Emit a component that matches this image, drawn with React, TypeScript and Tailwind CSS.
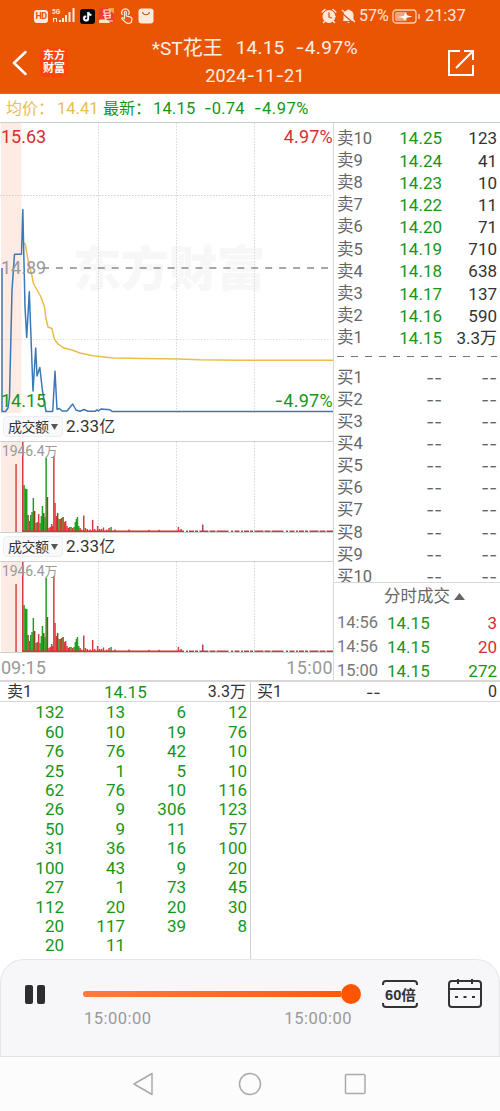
import React from "react";

const sells: [string, string, string][] = [
  ["卖10", "14.25", "123"],
  ["卖9", "14.24", "41"],
  ["卖8", "14.23", "10"],
  ["卖7", "14.22", "11"],
  ["卖6", "14.20", "71"],
  ["卖5", "14.19", "710"],
  ["卖4", "14.18", "638"],
  ["卖3", "14.17", "137"],
  ["卖2", "14.16", "590"],
  ["卖1", "14.15", "3.3万"],
];
const buys = ["买1", "买2", "买3", "买4", "买5", "买6", "买7", "买8", "买9", "买10"];
const trades: [string, string, string, boolean][] = [
  ["14:56", "14.15", "3", true],
  ["14:56", "14.15", "20", true],
  ["15:00", "14.15", "272", false],
];
const queue = [
  ["132", "13", "6", "12"],
  ["60", "10", "19", "76"],
  ["76", "76", "42", "10"],
  ["25", "1", "5", "10"],
  ["62", "76", "10", "116"],
  ["26", "9", "306", "123"],
  ["50", "9", "11", "57"],
  ["31", "36", "16", "100"],
  ["100", "43", "9", "20"],
  ["27", "1", "73", "45"],
  ["112", "20", "20", "30"],
  ["20", "117", "39", "8"],
  ["20", "11", "", ""],
];

const R = "#e0363c";
const G = "#1f9e1f";
const B = "#8a4a1c";
const bars: [number, number, string][] = [
  [16, 68, "#d04a4a"], [22.7, 90.5, "#d8383c"], [24, 47, G], [25.3, 43.5, G], [26.7, 43, G],
  [28, 17, B], [29.3, 11, R], [30.7, 17, G], [32, 20, G], [33.3, 34, G], [34.6, 21, B],
  [36, 9, G], [37.3, 10, R], [38.6, 18, R], [40, 9, G], [41.3, 16, G], [42.4, 26, G],
  [43.7, 19, B], [45, 15, G], [46.1, 74, G], [47.4, 35, B], [49, 4, R], [50.3, 5, R],
  [51.6, 8, R], [52.7, 6, R], [53.8, 76, R], [55, 29, R], [56.3, 16, R], [57.6, 19, B],
  [59, 13, G], [60.3, 13, R], [61.6, 14, G], [63, 15, B], [64.3, 10, R], [65.6, 11, R],
  [67, 6, R], [68.3, 4, R], [69.6, 5, R], [71, 5, G], [72.6, 4, R], [74, 5, G],
  [75.3, 10, G], [76.4, 13, G], [77.4, 15, G], [78.7, 6, G], [80, 4, R], [81.5, 2.5, R],
  [83.7, 16.5, R], [85.4, 4, G], [87.3, 3, R], [90, 2.5, R], [92.6, 12, R], [94.6, 3, R],
  [97.6, 6, R], [99.4, 3, R], [101.4, 3, R], [103.4, 4.5, R], [106.6, 2.5, R],
  [109, 4, R], [111, 5, G], [115, 2.5, R], [129, 2.5, R], [149, 2.2, R], [159, 2.2, R],
  [178.4, 5, R], [181, 3, R], [202.7, 7.5, "#b8404c"],
];

function Txt({ children }: { children: string }) {
  return (
    <>
      {children.split(/(-)/).map((s, i) =>
        s === "-" ? (
          <span key={i} className="font-[Inter]">-</span>
        ) : (
          <React.Fragment key={i}>{s}</React.Fragment>
        )
      )}
    </>
  );
}

function Grid({ h }: { h: number }) {
  return (
    <g stroke="#d8d8d8" strokeWidth="1" strokeDasharray="1.5 1.5">
      {[98.5, 176.5, 254.5].map((x) => (
        <line key={x} x1={x} x2={x} y1="0" y2={h} />
      ))}
    </g>
  );
}

function PriceChart() {
  return (
    <div className="relative h-[290px] w-full">
      <svg className="absolute inset-0" width="333" height="290" viewBox="0 123 333 290">
        <rect x="1" y="123" width="20.5" height="290" fill="#fdebe4" />
        <text x="73" y="286" textLength="192" fontSize="48" fontWeight="900" fill="#f7f7f7" fontFamily="Noto Sans CJK SC, sans-serif">东方财富</text>
        <g transform="translate(0 123)"><Grid h={290} /></g>
        <g stroke="#cfcfcf" strokeDasharray="1.5 1.5">
          <line x1="0" x2="331" y1="195.5" y2="195.5" />
          <line x1="0" x2="331" y1="339.5" y2="339.5" strokeOpacity=".6" />
        </g>
        <line x1="42" x2="329" y1="268" y2="268" stroke="#8b8b8b" strokeWidth="1.4" strokeDasharray="7 6.95" />
        <path d="M23 243L25.3 244L28 260L32 276L33.3 283L37 290L41 297L44.5 307L46 319L48 327L52 328.5L54.3 339L58 344L63.3 347.7L72 350L80 353L93 355.7L113 358L145 358.6L178 359L200 359.8L240 360.3L333 360.3" fill="none" stroke="#ebbd48" strokeWidth="1.5" strokeLinejoin="round" />
        <path d="M2 268V411.5H5.5L8 408L9.5 397L12 290L14.5 254.3H21.5L22.8 209.5L25 307L26.7 337.5L29.3 291.7L33 391L35.7 348L37 376L39.8 367.5L42.5 391L46 411.5H52.7L55 371.3L57 409.3L59.3 408.5L62 411H67L72.7 404L76 410L80 411.3L84 409.5L88 411.3H95L97 409.8L98.5 411L101 409L110 409.8L112 411.5H333" fill="none" stroke="#3a78b8" strokeWidth="1.5" strokeLinejoin="round" />
      </svg>
      <div className="absolute left-[1px] top-[4px] text-[18px] leading-5 text-[#d42f2f]">15.63</div>
      <div className="absolute right-0 top-[4px] text-[18px] leading-5 tracking-[0.2px] text-[#d42f2f]">4.97%</div>
      <div className="absolute left-[1px] top-[135px] text-[18px] leading-5 text-[#999]">14.89</div>
      <div className="absolute left-[1px] top-[268px] text-[18px] leading-5 text-[#169616]">14.15</div>
      <div className="absolute right-0 top-[268px] text-[18px] leading-5 tracking-[0.3px] text-[#169616]"><Txt>-4.97%</Txt></div>
    </div>
  );
}

function VolumeHeader() {
  return (
    <div className="flex h-[28px] items-center pb-px pl-[3px] text-[16px] leading-5 text-[#333]">
      <div className="flex h-[21px] w-[60px] items-center rounded-sm border border-[#eceef0] bg-[#f8f9fa] pl-[4px]">
        <span className="w-[43px] whitespace-nowrap text-[14px] tracking-[-0.5px]">成交额</span>
        <svg width="7" height="6"><path d="M0 0H7L3.5 6Z" fill="#555" /></svg>
      </div>
      <span className="ml-[3px] text-[17px]">2.33<span className="text-[16px]">亿</span></span>
    </div>
  );
}

function VolumeChart() {
  return (
    <div className="relative h-[92px] border-y border-[#d0d0d0]">
      <svg className="block" width="333" height="90">
        <rect x="1" y="0" width="20.5" height="90" fill="#fdebe4" />
        <Grid h={90} />
        {bars.map(([x, h, c], i) => (
          <rect key={i} x={x - 0.7} y={90 - h} width="1.5" height={h} fill={c} />
        ))}
        <path d="M22 89.2H184" stroke="#dd3038" strokeWidth="1.5" />
        <path d="M186 89.2H333" stroke="#c43a48" strokeWidth="1.5" strokeDasharray="2 1 5 1 3 1.5 9 1 6 1 12 2.5 2 1.5 5 1.5" />
      </svg>
      <div className="absolute left-[2px] top-0 text-[14px] leading-[18px] tracking-[-0.1px] text-[#999]">1946.4<span className="text-[13px]">万</span></div>
    </div>
  );
}

function StatusBar() {
  return (
    <div className="flex h-[32px] items-center pl-[34px] pr-[34px] text-[#ffe9dc]">
      <div className="flex h-[13px] w-[14px] items-center justify-center rounded-[3px] bg-[#ffe9dc] text-[9px] font-bold leading-none tracking-[-0.5px] text-[#ea5504]">HD</div>
      <svg className="ml-[4px]" width="24" height="16" viewBox="0 0 24 16" fill="#ffe9dc">
        <text x="0" y="6" fontSize="6.5" fontWeight="700" fontFamily="Roboto">5G</text>
        <path d="M1 10h4v4H4v-3H2v3H1zM7 12h2v2H7zM10 10h2v4h-2zM13 7h2v7h-2zM16.500 4h2v10h-2zM20.500 0h2v14h-2z" />
      </svg>
      <svg className="ml-[4px]" width="15" height="15" viewBox="0 0 15 15">
        <rect width="15" height="15" rx="3" fill="#080808" />
        <path d="M8 3v6.300a2.100 2.100 0 1 1-2.100-2.100M8 3c.3 1.800 1.500 2.800 3.300 3" fill="none" stroke="#4de5e5" strokeWidth="2" />
        <path d="M8.400 3.300v6.200a2.100 2.100 0 1 1-2.100-2.100M8.400 3.300c.3 1.700 1.500 2.500 3 2.700" fill="none" stroke="#fff" strokeWidth="1.500" />
      </svg>
      <svg className="ml-[4px]" width="16" height="16" viewBox="0 0 16 16">
        <rect width="15" height="15" rx="2" fill="#ef3d32" /><path d="M9 0h6v6z" fill="#f9a53b" />
        <path d="M5 2h6v3H5zM4 7.500h8M6 5v5h5V6M1 12h5l2-2M9 13h5" stroke="#ffe9dc" strokeWidth="1.200" fill="none" />
        <path d="M0 12h9l2 3H0z" fill="#ffe0c8" />
      </svg>
      <svg className="ml-[5px]" width="14" height="16" viewBox="0 0 14 16" fill="none" stroke="#ffe9dc" strokeWidth="1.200" strokeLinejoin="round" strokeLinecap="round">
        <path d="M4.500 9.500V4.200c0-1.300 1.800-1.300 1.800 0V8l4.500 1.200c1.200.4 1.400 1 1.100 2.200l-.7 3c-1.500 1-4 1-5.500 0L2 11c-.7-1.200.6-1.800 1.300-1.100l1.200 1" />
        <path d="M2.200 6.500a3.700 3.700 0 1 1 6.400 0" />
      </svg>
      <svg className="ml-[4px]" width="16" height="16" viewBox="0 0 16 16">
        <rect x=".5" y=".5" width="15" height="15" rx="3" fill="#ffe9dc" /><path d="M4.500 4c.7 3.600 6.300 3.600 7 0" fill="none" stroke="#b45526" strokeWidth="1.100" />
      </svg>
      <div className="flex-1" />
      <svg width="16" height="16" viewBox="0 0 16 16" fill="none" stroke="#ffe9dc" strokeLinecap="round">
        <circle cx="8" cy="8.500" r="6" fill="#ffe9dc" /><path d="M1.200 4L4 1.500M14.800 4L12 1.500M3.500 13.500l-1 1M12.500 13.500l1 1" strokeWidth="1.500" />
        <path d="M8 5v4l2.500 1" stroke="#ea5504" strokeWidth="1.300" />
      </svg>
      <svg className="ml-[4px]" width="15" height="16" viewBox="0 0 15 16">
        <path d="M2.500 12V7A5 5 0 0 1 6 2.200q1.500-1.500 3 0A5 5 0 0 1 12.500 7v5l1 1h-12zM6 14h3l-1.500 1z" fill="#ffe9dc" />
        <path d="M-1 3.500l14 12" stroke="#ea5504" strokeWidth="1.300" /><path d="M1 2l13 12" stroke="#ffe9dc" strokeWidth="1.200" />
      </svg>
      <span className="ml-[3px] w-[32px] whitespace-nowrap text-[16px] leading-4">57%</span>
      <svg className="ml-[1px]" width="29" height="15" viewBox="0 0 29 15">
        <rect x="1" y="1" width="23" height="13" rx="3" fill="none" stroke="#ffd0b5" strokeWidth="1.300" />
        <rect x="3" y="3" width="12" height="9" rx="1.500" fill="#f5a27a" /><path d="M5 8l7-1 1-3.500 2.500 3 5 1-6.500 1.500-1 2.500-2-2.500z" fill="#fff" /><path d="M27 5v5" stroke="#ffd0b5" strokeWidth="1.500" />
      </svg>
      <span className="ml-[4px] w-[41px] whitespace-nowrap text-[16.5px] leading-4 tracking-[-0.1px]">21:37</span>
    </div>
  );
}

export default function App() {
  return (
    <div className="flex h-[1111px] w-[500px] flex-col overflow-hidden bg-white font-[Roboto,'Noto_Sans_CJK_SC',sans-serif]">
      <header className="h-[94px] shrink-0 border-b border-[#c8703c] bg-[#ea5504] text-[#fff0e5]">
        <StatusBar />
        <div className="flex h-[61px]">
          <div className="flex w-[110px] items-center pl-[12px]">
            <svg width="15" height="26" viewBox="0 0 15 26"><path d="M13.500 2L2 13l11.500 11" fill="none" stroke="#fff" strokeWidth="2.500" strokeLinecap="round" strokeLinejoin="round" /></svg>
            <div className="ml-[13px] mt-[-1px] flex h-[29px] w-[28px] flex-col items-center justify-center rounded-sm bg-[#fb4408] text-[11px] font-bold leading-[13px] text-white"><span>东方</span><span>财富</span></div>
          </div>
          <div className="flex w-[290px] flex-col items-center text-[19px]">
            <div className="flex h-[30px] items-center whitespace-pre pt-[2px] leading-[30px]">
              <span>*ST<span className="text-[20px]">花王</span></span><span className="ml-[13px] tracking-[0.2px]">14.15</span><span className="ml-[11px] tracking-[0.5px]"><Txt>-4.97%</Txt></span>
            </div>
            <div className="mt-[2px] text-[18px] leading-6 tracking-[0.2px]"><Txt>2024-11-21</Txt></div>
          </div>
          <div className="flex flex-1 items-center justify-end pr-[25px]">
            <svg width="28" height="28" viewBox="0 0 28 28" fill="none" stroke="#fff" strokeWidth="2"><path d="M13 2H2v24h24V16M17 2h9v9M26 2L9 19" /></svg>
          </div>
        </div>
      </header>

      <div className="flex h-[28px] shrink-0 items-center whitespace-nowrap pl-[6px] pt-[2px] text-[16.5px] text-[#169616]">
        <span className="w-[51px] text-[16px] text-[#e7bd55]">均价：</span>
        <span className="w-[46px] text-[#e7bd55]">14.41</span>
        <span className="w-[50px] text-[16px]">最新：</span>
        <span className="w-[51px] tracking-[0.2px]">14.15</span>
        <span className="w-[50px] tracking-[0.2px]"><Txt>-0.74</Txt></span>
        <span className="tracking-[0.5px]"><Txt>-4.97%</Txt></span>
      </div>

      <section className="flex h-[560px] shrink-0 border-b-2 border-t border-b-[#d8d8d8] border-t-[#c5cfd2]">
        <div className="w-[334px] border-r border-[#d5d9dc]">
          <PriceChart />
          <VolumeHeader />
          <VolumeChart />
          <VolumeHeader />
          <VolumeChart />
          <div className="flex h-[28px] items-center justify-between pl-[1px] text-[18px] text-[#999]"><span>09:15</span><span className="tracking-[0.4px]">15:00</span></div>
        </div>
        <div className="flex w-[166px] flex-col text-[17px] text-[#333]">
          <div className="h-[460px] shrink-0 overflow-hidden border-b border-[#d5d9dc] pl-[3px] pr-[3px] pt-[5px]">
            {sells.map(([a, p, v]) => (
              <div key={a} className="flex h-[22.2px] items-center whitespace-nowrap">
                <span className="w-[50px] text-[16.5px] text-[#666]">{a}</span>
                <span className="w-[55px] text-right text-[#169616]">{p}</span>
                <span className="flex-1 text-right">{v}</span>
              </div>
            ))}
            <svg className="block" width="160" height="17"><path d="M0 6.500H160" stroke="#777" strokeDasharray="7 7" /></svg>
            {buys.map((a) => (
              <div key={a} className="flex h-[22.1px] items-center whitespace-nowrap leading-[20px]">
                <span className="w-[50px] text-[16.5px] text-[#666]">{a}</span>
                <span className="w-[55px] text-right text-[#666]"><Txt>--</Txt></span>
                <span className="flex-1 text-right text-[#666]"><Txt>--</Txt></span>
              </div>
            ))}
          </div>
          <div className="flex h-[27px] shrink-0 items-center pl-[50px] text-[16.5px] leading-5 text-[#666]">
            <span className="whitespace-nowrap">分时成交</span>
            <svg className="ml-[4px]" width="11" height="7" fill="#666"><path d="M0 7L5.500 0L11 7Z" /></svg>
          </div>
          {trades.map(([t, p, v, red], i) => (
            <div key={i} className="flex h-[24px] shrink-0 items-center pl-[3px] pr-[3px] pt-px leading-5">
              <span className="w-[50px] text-[16.5px] text-[#777]">{t}</span>
              <span className="w-[50px] text-[#169616]">{p}</span>
              <span className={red ? "flex-1 text-right text-[#d42f2f]" : "flex-1 text-right text-[#169616]"}>{v}</span>
            </div>
          ))}
        </div>
      </section>

      <section className="flex h-[277px] shrink-0 text-[17px]">
        <div className="w-[251px] border-r border-[#d0d3d6]">
          <div className="mb-px flex h-[20px] items-center border-b border-[#d5d9dc] pl-[7px] pr-[4px] pt-px text-[16px] leading-[18px] text-[#333]">
            <span className="w-[97px]">卖1</span><span className="text-[17px] text-[#169616]">14.15</span><span className="flex-1 text-right">3.3万</span>
          </div>
          {queue.map((row, i) => (
            <div key={i} className="grid h-[19.45px] grid-cols-[64px_61px_61px_61px] items-center text-right leading-[17px] text-[#169616]">
              {row.map((v, j) => (<span key={j}>{v}</span>))}
            </div>
          ))}
        </div>
        <div className="flex h-[20px] flex-1 items-center border-b border-[#d5d9dc] pl-[6px] pr-[3px] pt-px text-[16px] leading-[18px] text-[#333]">
          <span className="w-[109px]">买1</span><span><Txt>--</Txt></span><span className="flex-1 text-right">0</span>
        </div>
      </section>

      <section className="h-[97px] shrink-0 rounded-t-[24px] border border-b-0 border-[#e6e6ea] bg-[#f7f7fa]">
        <div className="flex pl-[24px] pt-[21px]">
          <svg className="mt-[4px]" width="20" height="19" fill="#2e2e2e"><rect width="8" height="19" rx="2" /><rect x="12" width="8" height="19" rx="2" /></svg>
          <div className="ml-[38px] w-[278px]">
            <div className="flex h-[26px] items-center">
              <div className="h-[6px] w-[258px] rounded-l-full bg-linear-to-r from-[#ff7a3d] to-[#ff5a0a]" />
              <div className="h-[20px] w-[20px] rounded-full bg-[#ff5500]" />
            </div>
            <div className="flex justify-between pl-px pr-[9px] text-[16.5px] leading-[24px] tracking-[0.5px] text-[#999]"><span>15:00:00</span><span>15:00:00</span></div>
          </div>
          <svg className="ml-[21px] mt-[-1px]" width="36" height="28" viewBox="0 0 36 28" fill="none" stroke="#333" strokeWidth="2">
            <path d="M1 5V4a3 3 0 0 1 3-3h28a3 3 0 0 1 3 3v1M1 23v1a3 3 0 0 0 3 3h28a3 3 0 0 0 3-3v-1" />
            <text x="3" y="20" textLength="31" lengthAdjust="spacingAndGlyphs" fontSize="14" fontWeight="700" fill="#333" stroke="none" fontFamily="Liberation Sans, Noto Sans CJK SC, sans-serif">60倍</text>
          </svg>
          <svg className="ml-[30px] mt-[-2px]" width="34" height="30" viewBox="0 0 34 30" fill="none" stroke="#333" strokeWidth="2">
            <rect x="1" y="2" width="32" height="26" rx="3" /><path d="M1 10h32M10 0v5M24 0v5M7 18h3M15.500 18h3M24 18h3" />
          </svg>
        </div>
      </section>

      <nav className="flex h-[55px] shrink-0 items-center border-t border-[#e2e2e4] bg-[#fcfcfc] pl-[132px]">
        <svg width="240" height="24" viewBox="0 0 240 24" fill="none" stroke="#aaa" strokeWidth="1.500" strokeLinejoin="round">
          <path d="M2 12L20 1.500V22.500Z" /><circle cx="118" cy="12" r="10.500" /><rect x="213.500" y="2.500" width="19.500" height="19" rx="1" />
        </svg>
      </nav>
    </div>
  );
}
